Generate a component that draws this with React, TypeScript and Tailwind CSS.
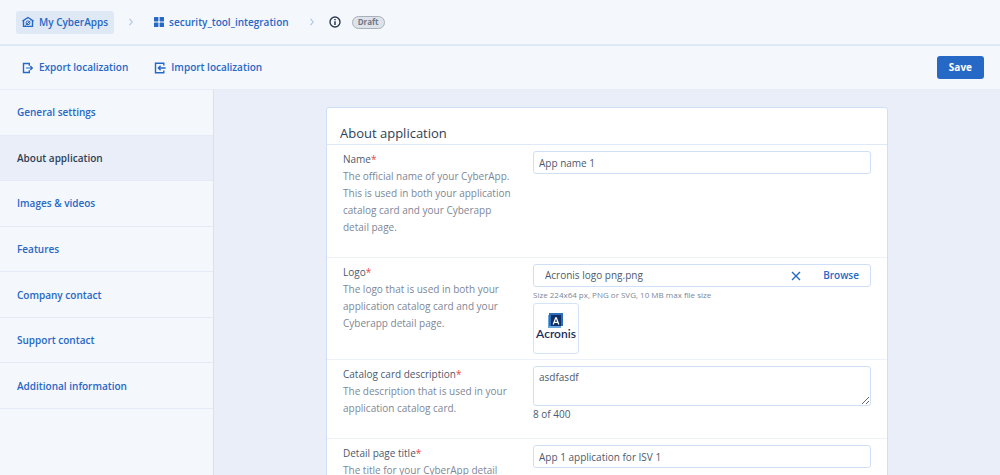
import { useState, type ReactNode } from "react";
import clsx from "clsx";

const SECTIONS = [
  "General settings",
  "About application",
  "Images & videos",
  "Features",
  "Company contact",
  "Support contact",
  "Additional information",
];

const inputClass =
  "block w-full rounded-[3px] border border-[#cfdff5] bg-white px-[5px] text-[10px] text-[#4d5a6e] outline-none focus:border-[#2668c5]";

export default function App() {
  const [active, setActive] = useState("About application");
  const [name, setName] = useState("App name 1");
  const [description, setDescription] = useState("asdfasdf");
  const [title, setTitle] = useState("App 1 application for ISV 1");

  return (
    <div className="flex h-screen flex-col overflow-hidden bg-[#f4f7fc] font-['Open_Sans','Noto_Sans',sans-serif] text-[10px] text-[#2668c5]">
      <header className="flex h-[46px] shrink-0 items-center border-b-2 border-[#dfe8f5] px-4">
        <nav aria-label="Breadcrumb" className="flex items-center">
          <a
            href="#apps"
            className="flex h-[23px] items-center gap-[5px] rounded-[3px] bg-[#dfe9f6] px-1.5 font-semibold"
          >
            <HomeIcon />
            My CyberApps
          </a>
          <Chevron />
          <a href="#app" className="flex items-center gap-[5px] px-1.5 font-semibold">
            <GridIcon />
            security_tool_integration
          </a>
          <Chevron />
        </nav>
        <span className="flex items-center gap-[11px]">
          <InfoIcon />
          <span className="flex h-[13px] items-center rounded-full border border-[#a9b0bb] bg-[#dee2e9] px-[5px] text-[8px] font-bold text-[#6f7989]">
            Draft
          </span>
        </span>
      </header>

      <div className="flex h-11 shrink-0 items-center border-b border-[#e6edf8] pr-4 pl-[22px]">
        <button type="button" className="flex items-center gap-1.5 font-semibold">
          <ExportIcon />
          Export localization
        </button>
        <button type="button" className="ml-[26px] flex items-center gap-[5px] font-semibold">
          <ImportIcon />
          Import localization
        </button>
        <button
          type="button"
          className="ml-auto h-[23px] rounded-[3px] bg-[#2668c5] px-3 font-bold text-white"
        >
          Save
        </button>
      </div>

      <div className="flex min-h-0 flex-1">
        <nav aria-label="Sections" className="w-[214px] shrink-0 border-r border-[#d5e2f4]">
          <ul className="grid h-[319px] auto-rows-fr">
            {SECTIONS.map((s) => (
              <li key={s} className="border-b border-[#e4ebf7]">
                <button
                  type="button"
                  onClick={() => setActive(s)}
                  className={clsx(
                    "block h-full w-full px-[17px] pt-px text-left font-semibold",
                    s === active && "bg-[#e9eef9] text-[#2f3e55]"
                  )}
                >
                  {s}
                </button>
              </li>
            ))}
          </ul>
        </nav>

        <main className="flex-1 overflow-y-auto bg-[#e9eef9] pt-[17px] [scrollbar-width:none]">
          <form className="mx-auto max-w-[562px] rounded-[3px] border border-[#cfdff5] bg-white">
            <h1 className="flex h-[37px] items-end border-b border-[#dfe9f8] px-[13px] pb-0.5 text-[13px] leading-[18px] text-[#2f3e55]">
              About application
            </h1>

            <Field
              id="name"
              label="Name"
              hint="The official name of your CyberApp. This is used in both your application catalog card and your Cyberapp detail page."
            >
              <input
                id="name"
                value={name}
                onChange={(e) => setName(e.target.value)}
                className={clsx(inputClass, "h-[23px]")}
              />
            </Field>

            <Field
              id="logo"
              label="Logo"
              hint="The logo that is used in both your application catalog card and your Cyberapp detail page."
            >
              <div className="flex h-[23px] items-center rounded-[3px] border border-[#cfdff5] px-[11px]">
                <input
                  id="logo"
                  readOnly
                  value="Acronis logo png.png"
                  className="min-w-0 flex-1 text-[10px] text-[#4d5a6e] outline-none"
                />
                <button type="button" aria-label="Remove logo" className="text-[#2668c5]">
                  <CrossIcon />
                </button>
                <button type="button" className="ml-[22px] font-semibold text-[#2668c5]">
                  Browse
                </button>
              </div>
              <p className="text-[8px] leading-4 text-[#7d8798]">
                Size 224x64 px, PNG or SVG, 10 MB max file size
              </p>
              <div className="mb-[5px] flex h-[51px] w-[46px] flex-col items-center rounded-[3px] border border-[#d5e3f6] pt-2">
                <AcronisLogo />
              </div>
            </Field>

            <Field
              id="description"
              label="Catalog card description"
              hint="The description that is used in your application catalog card."
            >
              <textarea
                id="description"
                value={description}
                onChange={(e) => setDescription(e.target.value)}
                className={clsx(inputClass, "h-10 resize-y py-0.5 leading-4")}
              />
              <p className="leading-[17px] text-[#4d5a6e]">{description.length} of 400</p>
            </Field>

            <Field id="title" label="Detail page title" hint="The title for your CyberApp detail">
              <input
                id="title"
                value={title}
                onChange={(e) => setTitle(e.target.value)}
                className={clsx(inputClass, "h-[23px]")}
              />
            </Field>
          </form>
        </main>
      </div>
    </div>
  );
}

function Field({
  id,
  label,
  hint,
  children,
}: {
  id: string;
  label: string;
  hint: string;
  children: ReactNode;
}) {
  return (
    <div className="flex border-b border-[#edf2fa] px-4 pt-1.5">
      <div className="w-[190px] shrink-0 pr-5 pb-[21px] leading-[17px]">
        <label htmlFor={id} className="block text-[#4d5a6e]">
          {label}
          <span className="text-[#f04438]">*</span>
        </label>
        <p className="text-[#7d8798]">{hint}</p>
      </div>
      <div className="min-w-0 flex-1">{children}</div>
    </div>
  );
}

function Chevron() {
  return (
    <svg width="4" height="8" viewBox="0 0 4 8" fill="none" className="mx-[15px]" aria-hidden>
      <path d="M0.5 0.8L3.2 4L0.5 7.2" stroke="#a9c3ea" strokeWidth="1.1" />
    </svg>
  );
}

function HomeIcon() {
  return (
    <svg width="12" height="12" viewBox="0 0 12 12" fill="none" stroke="currentColor" aria-hidden>
      <path d="M0.5 5.2L6 1.5L11.5 5.2" strokeWidth="1.4" strokeLinejoin="round" />
      <path d="M1.5 4.8V10.4H10.5V4.8" strokeWidth="1.4" />
      <circle cx="6" cy="6.8" r="1.9" strokeWidth="1" />
      <path d="M3.2 9.6L8.4 4.8" strokeWidth="1" />
    </svg>
  );
}

function GridIcon() {
  return (
    <svg width="10" height="10" viewBox="0 0 10 10" fill="currentColor" aria-hidden>
      <rect width="4.4" height="4.4" rx="0.6" />
      <rect x="5.6" width="4.4" height="4.4" rx="0.6" />
      <rect y="5.6" width="4.4" height="4.4" rx="0.6" />
      <rect x="5.6" y="5.6" width="4.4" height="4.4" rx="0.6" />
    </svg>
  );
}

function InfoIcon() {
  return (
    <svg width="12" height="12" viewBox="0 0 12 12" fill="none" stroke="#2b3a52" aria-label="Info">
      <circle cx="6" cy="6" r="5" strokeWidth="1.4" />
      <path d="M6 5.2V9M6 3V4.3" strokeWidth="1.5" />
    </svg>
  );
}

function ExportIcon() {
  return (
    <svg width="11" height="12" viewBox="0 0 11 12" fill="none" stroke="currentColor" aria-hidden>
      <path d="M7.3 3.8V1.5H1.5V10.5H7.3V8.2" strokeWidth="1.4" />
      <path d="M4 6H10.2M8.3 4L10.3 6L8.3 8" strokeWidth="1.2" />
    </svg>
  );
}

function ImportIcon() {
  return (
    <svg width="12" height="12" viewBox="0 0 12 12" fill="none" stroke="currentColor" aria-hidden>
      <path d="M9.8 3.4V1.3H1.5V10.7H9.8V8.6" strokeWidth="1.4" />
      <path d="M11.6 6H4.4M6.6 3.7L4.3 6L6.6 8.3" strokeWidth="1.3" />
    </svg>
  );
}

function CrossIcon() {
  return (
    <svg width="10" height="10" viewBox="0 0 10 10" fill="none" stroke="currentColor" aria-hidden>
      <path d="M1 1L9 9M9 1L1 9" strokeWidth="1.4" />
    </svg>
  );
}

function AcronisLogo() {
  return (
    <svg width="44" height="32" viewBox="0 0 44 32" role="img" aria-label="Acronis">
      <rect x="14" y="3" width="13" height="13" fill="#6aa6e0" />
      <rect x="15" y="1" width="14" height="13" fill="#2f6db8" />
      <rect x="17" y="3" width="10" height="11" fill="#0f2f66" />
      <path d="M19.2 12.4L21.7 5.8H22.3L24.8 12.4M20.2 10.4H23.8" fill="none" stroke="#fff" strokeWidth="1.3" />
      <text
        x="22"
        y="26"
        textAnchor="middle"
        fontSize="12"
        fontWeight="600"
        fontFamily="Lato, sans-serif"
        fill="#1c2d5a"
      >
        Acronis
      </text>
    </svg>
  );
}
